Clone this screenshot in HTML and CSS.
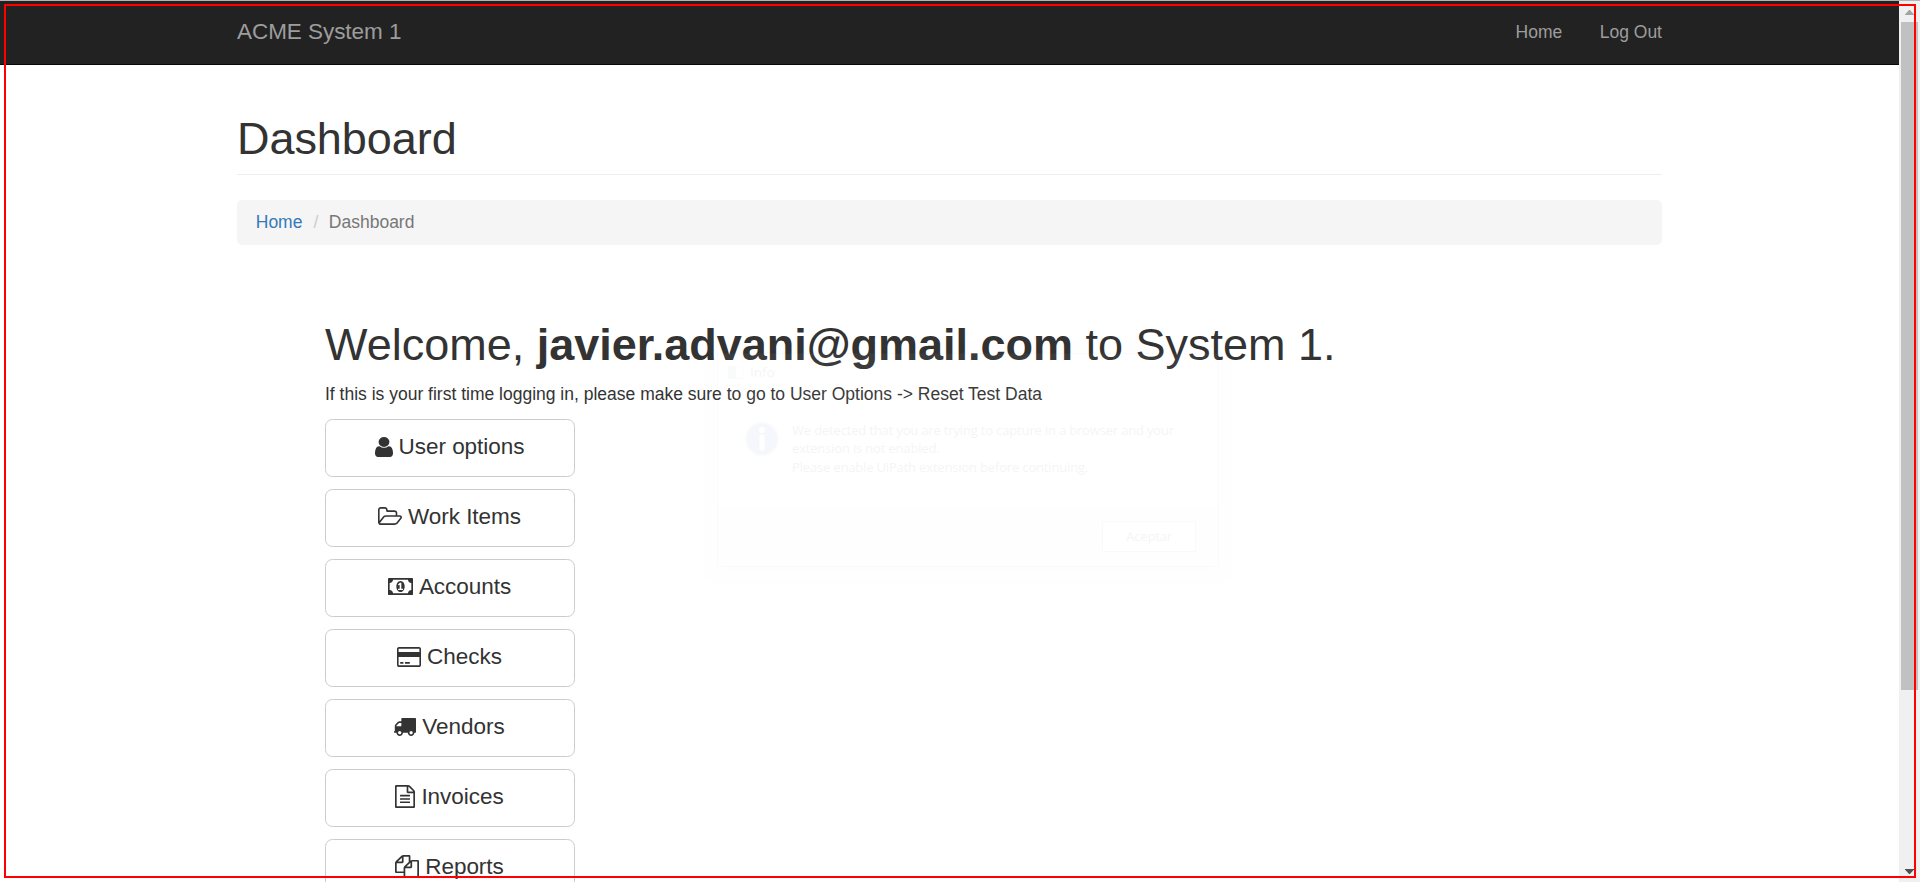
FILE: index.html
```html
<!DOCTYPE html>
<html lang="en">
<head>
<meta charset="utf-8">
<title>ACME System 1</title>
<link rel="stylesheet" href="styles.css">
</head>
<body>
<div class="window">
  <div class="page">
    <nav class="navbar">
      <div class="container navbar-inner">
        <a class="brand">ACME System 1</a>
        <div class="nav-links"><a>Home</a><a>Log Out</a></div>
      </div>
    </nav>
    <main class="container">
      <h1 class="page-header">Dashboard</h1>
      <div class="breadcrumb"><a>Home</a><span class="sep">/</span><span>Dashboard</span></div>
      <section class="content">
        <h1 class="welcome">Welcome, <b>javier.advani@gmail.com</b> to System 1.</h1>
        <p class="hint">If this is your first time logging in, please make sure to go to User Options -&gt; Reset Test Data</p>
        <div class="menu">
          <button class="btn b-user"><svg class="icon" viewBox="256 128 1280 1536" preserveAspectRatio="none"><path d="M1536 1399q0 109-62.5 187t-150.5 78h-854q-88 0-150.5-78t-62.5-187q0-85 8.5-160.5t31.5-152 58.5-131 94-89 134.5-34.5q131 128 313 128t313-128q76 0 134.5 34.5t94 89 58.5 131 31.5 152 8.5 160.5zm-256-887q0 159-112.5 271.5t-271.5 112.5-271.5-112.5-112.5-271.5 112.5-271.5 271.5-112.5 271.5 112.5 112.5 271.5z"/></svg><span>User options</span></button>
          <button class="btn b-work"><svg class="icon" viewBox="64 128 1909 1408" preserveAspectRatio="none"><path d="M1845 931q0-35-53-35h-1088q-40 0-85.5 21.5t-71.5 52.5l-294 363q-18 24-18 40 0 35 53 35h1088q40 0 86-22t71-53l294-363q18-22 18-39zm-1141-163h768v-160q0-40-28-68t-68-28h-576q-40 0-68-28t-28-68v-64q0-40-28-68t-68-28h-320q-40 0-68 28t-28 68v853l256-315q44-53 116-87.5t140-34.5zm1269 163q0 62-46 120l-295 363q-43 53-116 87.5t-140 34.5h-1088q-92 0-158-66t-66-158v-960q0-92 66-158t158-66h320q92 0 158 66t66 158v32h544q92 0 158 66t66 158v160h192q54 0 99 24.5t67 70.5q15 32 15 68z"/></svg><span>Work Items</span></button>
          <button class="btn b-acc"><svg class="icon" viewBox="0 256 1920 1280" preserveAspectRatio="none"><path d="M768 1152h384v-96h-128v-448h-114l-148 137 77 80q42-37 55-57h2v288h-128v96zm512-256q0 70-21 142t-59.5 134-101.5 101-138 39-138-39-101.5-101-59.5-134-21-142 21-142 59.5-134 101.5-101 138-39 138 39 101.5 101 59.5 134 21 142zm512 256v-512q-106 0-181-75t-75-181h-1152q0 106-75 181t-181 75v512q106 0 181 75t75 181h1152q0-106 75-181t181-75zm128-832v1152q0 26-19 45t-45 19h-1792q-26 0-45-19t-19-45v-1152q0-26 19-45t45-19h1792q26 0 45 19t19 45z"/></svg><span>Accounts</span></button>
          <button class="btn b-chk"><svg class="icon" viewBox="0 128 1920 1536" preserveAspectRatio="none"><path d="M1760 128q66 0 113 47t47 113v1216q0 66-47 113t-113 47h-1600q-66 0-113-47t-47-113v-1216q0-66 47-113t113-47h1600zm-1600 128q-13 0-22.5 9.500t-9.500 22.500v224h1664v-224q0-13-9.500-22.500t-22.500-9.500h-1600zm1600 1280q13 0 22.500-9.500t9.500-22.500v-608h-1664v608q0 13 9.500 22.500t22.500 9.500h1600zm-1504-128v-128h256v128h-256zm384 0v-128h384v128h-384z"/></svg><span>Checks</span></button>
          <button class="btn b-ven"><svg class="icon" viewBox="64 256 1728 1408" preserveAspectRatio="none"><path d="M640 1408q0-52-38-90t-90-38-90 38-38 90 38 90 90 38 90-38 38-90zm-384-512h384v-256h-158q-13 0-22 9l-195 195q-9 9-9 22v30zm1280 512q0-52-38-90t-90-38-90 38-38 90 38 90 90 38 90-38 38-90zm256-1088v1024q0 15-4 26.500t-13.500 18.500-16.500 11.500-23.500 6-22.500 2-25.500 0-22.500-.5q0 106-75 181t-181 75-181-75-75-181h-384q0 106-75 181t-181 75-181-75-75-181h-64q-3 0-22.500.5t-25.500 0-22.500-2-23.500-6-16.500-11.500-13.500-18.500-4-26.500q0-26 19-45t45-19v-320q0-8-.5-35t0-38 2.500-34.500 6.500-37 14-30.500 22.500-30l198-198q19-19 50.500-32t58.500-13h160v-192q0-26 19-45t45-19h1024q26 0 45 19t19 45z"/></svg><span>Vendors</span></button>
          <button class="btn b-inv"><svg class="icon" viewBox="128 0 1536 1792" preserveAspectRatio="none"><path d="M1596 380q28 28 48 76t20 88v1152q0 40-28 68t-68 28h-1344q-40 0-68-28t-28-68v-1600q0-40 28-68t68-28h896q40 0 88 20t76 48zm-444-244v376h376q-10-29-22-41l-313-313q-12-12-41-22zm384 1528v-1024h-416q-40 0-68-28t-28-68v-416h-768v1536h1280zm-1024-864q0-14 9-23t23-9h704q14 0 23 9t9 23v64q0 14-9 23t-23 9h-704q-14 0-23-9t-9-23v-64zm736 224q14 0 23 9t9 23v64q0 14-9 23t-23 9h-704q-14 0-23-9t-9-23v-64q0-14 9-23t23-9h704zm0 256q14 0 23 9t9 23v64q0 14-9 23t-23 9h-704q-14 0-23-9t-9-23v-64q0-14 9-23t23-9h704z"/></svg><span>Invoices</span></button>
          <button class="btn b-rep"><svg class="icon" viewBox="0 0 1792 1792" preserveAspectRatio="none"><path d="M1696 384q40 0 68 28t28 68v1216q0 40-28 68t-68 28h-960q-40 0-68-28t-28-68v-288h-544q-40 0-68-28t-28-68v-672q0-40 20-88t48-76l408-408q28-28 76-48t88-20h416q40 0 68 28t28 68v328q68-40 128-40h416zm-544 213l-299 299h299v-299zm-640-384l-299 299h299v-299zm196 647l316-316v-416h-384v416q0 40-28 68t-68 28h-416v640h512v-256q0-40 20-88t48-76zm956 804v-1152h-384v416q0 40-28 68t-68 28h-416v640h896z"/></svg><span>Reports</span></button>
        </div>
      </section>
    </main>
  </div>
  <div class="scrollbar">
    <svg class="arrow up" viewBox="0 0 9 5"><path d="M4 0h1l4 4.500v.5h-9v-.5z"/></svg>
    <div class="thumb"></div>
    <svg class="arrow down" viewBox="0 0 9 5"><path d="M0 0h9v.5l-4 4.500h-1l-4-4.500z"/></svg>
  </div>
</div>
<div class="dialog">
  <div class="dialog-title"><span class="app-icon"></span><span>Info</span></div>
  <div class="dialog-body">
    <svg class="info" viewBox="0 0 36 36"><circle class="ring" cx="18" cy="18" r="17.500"/><circle class="disc" cx="18" cy="18" r="15.500"/><circle class="mark" cx="18" cy="9" r="3"/><rect class="mark" x="15.500" y="13.500" width="5" height="16" rx="1"/></svg>
    <div class="message"><div>We detected that you are trying to capture in a browser and your</div><div>extension is not enabled.</div><div>Please enable UiPath extension before continuing.</div></div>
  </div>
  <div class="dialog-footer"><span class="accept">Aceptar</span></div>
</div>
<div class="highlight"></div>
</body>
</html>
```
FILE: styles.css
```css
* { box-sizing: border-box; }
html, body { height: 882px; overflow: hidden; }
body {
  margin: 0;
  background: #fff;
  color: #333;
  font: 17.5px/25px "Liberation Sans", Arial, sans-serif;
}
.window { display: flex; height: 882px; border-top: 1px solid #b4b4b4; }
.page { flex: 1; height: 881px; overflow: hidden; }
.container { width: 1425px; margin: 0 auto; }
.navbar { height: 64px; background: #222; border-bottom: 1px solid #080808; color: #9d9d9d; }
.navbar-inner { display: flex; justify-content: space-between; padding-top: 18.75px; }
.brand { font-size: 22.5px; line-height: 24px; letter-spacing: -.05px; }
.nav-links { display: flex; gap: 37.5px; }
h1 { margin: 0; font-size: 45px; line-height: 49.5px; font-weight: 400; }
.page-header { margin-top: 48.5px; padding-bottom: 10.5px; border-bottom: 1px solid #eee; letter-spacing: -.05px; }
.breadcrumb {
  display: flex;
  height: 45px;
  margin-top: 25px;
  padding: 10px 18.75px;
  background: #f5f5f5;
  border-radius: 5px;
  color: #777;
}
.breadcrumb a { color: #337ab7; }
.sep { color: #ccc; padding: 0 10.500px 0 11px; }
.content { padding: 75.700px 0 0 88px; }
.welcome { white-space: pre; letter-spacing: -.01px; }
.hint { margin: 12.500px 0 11.500px; white-space: nowrap; }
.menu { display: flex; flex-direction: column; gap: 12px; width: 250px; }
.btn {
  display: flex;
  justify-content: center;
  height: 58px;
  padding: 12.5px 1px 0 0;
  border: 1px solid #ccc;
  border-radius: 7.5px;
  background: #fff;
  color: #333;
  font: 22.5px/30px "Liberation Sans", Arial, sans-serif;
}
.btn span { white-space: nowrap; letter-spacing: -.04px; }
.icon { fill: #333; flex: none; margin-right: 6px; }
.b-user .icon { width: 18px; height: 20px; margin-top: 4.5px; }
.b-work .icon { width: 24px; height: 18px; margin-top: 4.5px; }
.b-acc .icon { width: 25px; height: 17px; margin-top: 5.5px; }
.b-chk .icon { width: 24px; height: 20px; margin-top: 4.5px; }
.b-ven .icon { width: 22px; height: 18px; margin-top: 6px; }
.b-inv .icon { width: 20px; height: 23px; margin-top: 2.5px; }
.b-rep .icon { width: 24px; height: 23px; margin-top: 2.5px; }

.scrollbar { width: 21px; background: #f0f0f0; display: flex; flex-direction: column; }
.arrow { width: 9px; height: 5px; margin-left: 6px; flex: none; }
.up { margin-top: 9px; fill: #a3a3a3; }
.down { margin-top: auto; margin-bottom: 8px; fill: #505050; }
.thumb { width: 17px; height: 668px; margin: 7px 0 0 2px; background: #c1c1c1; }

/* Dialog caught at the end of its fade-out */
.dialog {
  position: absolute;
  left: 717px;
  top: 353px;
  width: 502px;
  height: 214px;
  display: flex;
  flex-direction: column;
  background: #fff;
  border: 1px solid #999;
  box-shadow: 0 3px 12px 2px rgba(0, 0, 0, .15);
  opacity: .04;
  color: #000;
  font: 13px/18.3px "Open Sans", "Noto Sans", sans-serif;
}
.dialog-title { display: flex; align-items: center; gap: 6px; height: 36px; padding-left: 10px; font-size: 13.5px; }
.app-icon { width: 16px; height: 13px; border: 1px solid #bbb; border-left: 8px solid #6a9; }
.dialog-body { display: flex; flex: 1; padding: 31px 0 0 26px; }
.info { width: 36px; height: 36px; flex: none; }
.ring { fill: #ccc; }
.disc { fill: #2846c8; }
.mark { fill: #fff; }
.message { margin: 0 0 0 12px; white-space: nowrap; letter-spacing: -.17px; }
.dialog-footer { display: flex; justify-content: flex-end; height: 59px; padding: 14px 22px 0 0; background: #f0f0f0; }
.accept { width: 94px; height: 31px; line-height: 29px; text-align: center; letter-spacing: -.19px; border: 1px solid #777; background: #fff; }
.highlight {
  position: absolute;
  left: 4px;
  top: 4px;
  width: 1912px;
  height: 874px;
  border: 2px solid #f00;
}
```
